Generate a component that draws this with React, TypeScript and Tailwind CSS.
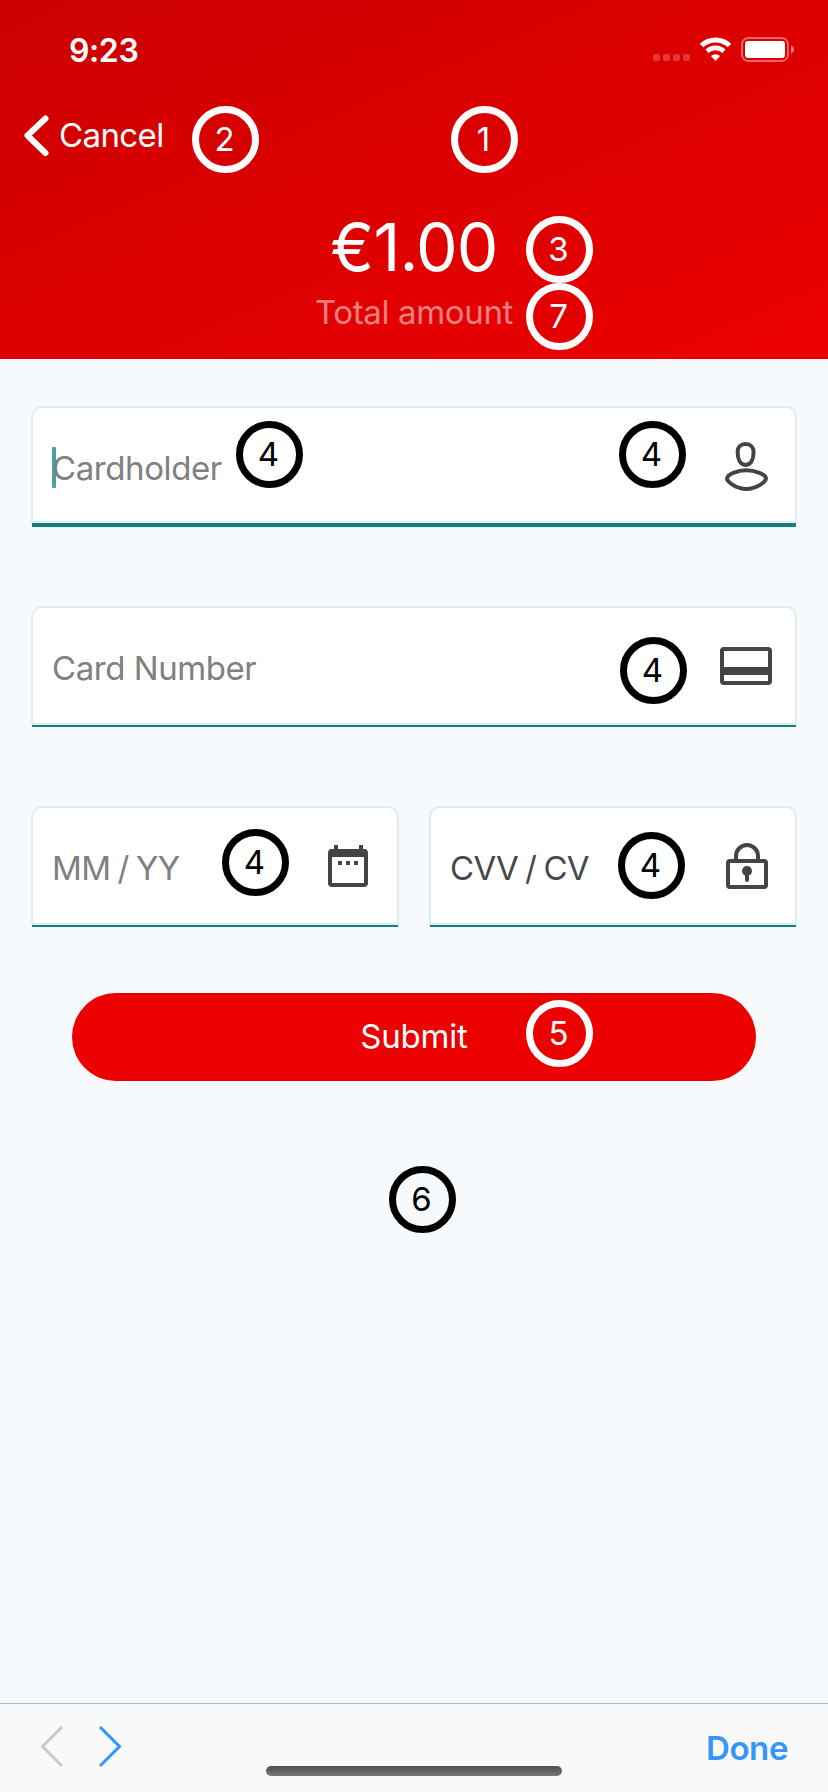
import type { ReactNode } from "react";

type BadgeProps = { n: number; place: string; tone: string };

function Badge({ n, place, tone }: BadgeProps) {
  return (
    <span
      className={`absolute flex h-[67px] w-[67px] items-center justify-center rounded-full border-[7px] pr-0.5 text-[33px] leading-none ${place} ${tone}`}
    >
      {n}
    </span>
  );
}

const light = "border-white text-white";
const dark = "border-black text-black";

type FieldProps = { children: ReactNode; icon: ReactNode; active?: boolean; className?: string };

function Field({ children, icon, active = false, className = "" }: FieldProps) {
  return (
    <div className={`flex h-[121px] flex-col ${className}`}>
      <div className="flex min-h-0 flex-1 items-start justify-between rounded-t-[11px] border-2 border-[#ddedf3] bg-white pl-[19px]">
        <div className="flex h-[120px] items-center text-[33px] leading-none whitespace-nowrap">{children}</div>
        {icon}
      </div>
      <div className={`mx-px shrink-0 bg-[#147e80] ${active ? "h-1" : "h-0.5"}`} />
    </div>
  );
}

const iconClass = "mt-[28px] mr-[19px] h-[60px] w-[60px] shrink-0";

function PersonIcon() {
  return (
    <svg className={iconClass} viewBox="0 0 60 60" fill="none" stroke="#444" strokeWidth="4">
      <path d="M29.5 8C24.8 8 21.6 11.2 21.6 15.8C21.6 22.7 23.8 28.9 29.5 28.9C35.2 28.9 37.6 22.7 37.6 15.8C37.6 11.2 34.2 8 29.5 8Z" />
      <path d="M30.3 34.3C39 34.3 50 38.2 50 42.6C50 45.5 40.5 53 30.3 53C20 53 11 45.5 11 42.6C11 38.2 21.5 34.3 30.3 34.3Z" />
    </svg>
  );
}

function CardIcon() {
  return (
    <svg className={iconClass} viewBox="0 0 60 60" fill="none">
      <rect x="6" y="13" width="48" height="34" rx="2" stroke="#444" strokeWidth="4" />
      <rect x="6" y="31" width="48" height="8" fill="#444" />
    </svg>
  );
}

function CalendarIcon() {
  return (
    <svg className={iconClass} viewBox="0 0 60 60" fill="none">
      <rect x="12" y="15" width="36" height="34" rx="2" stroke="#444" strokeWidth="4" />
      <path
        d="M12 13h36v8H12zM16 9h4v5h-4zM41 9h4v5h-4zM20 25h4v4h-4zM28 25h4v4h-4zM36 25h4v4h-4z"
        fill="#444"
      />
    </svg>
  );
}

function LockIcon() {
  return (
    <svg className={iconClass} viewBox="0 0 60 60" fill="none" stroke="#444" strokeWidth="4">
      <rect x="12" y="25" width="38" height="26" rx="2" />
      <path d="M20 25v-5a11 11 0 0 1 22 0v5" />
      <circle cx="31" cy="35" r="5" fill="#444" stroke="none" />
      <path d="M31 36v8" strokeLinecap="round" />
    </svg>
  );
}

function StatusIcons() {
  return (
    <svg className="h-[30px] w-[150px]" viewBox="0 0 150 30" fill="none">
      <g fill="#fff" fillOpacity="0.22">
        <rect x="3" y="19" width="7" height="7" rx="2" />
        <rect x="13" y="19" width="7" height="7" rx="2" />
        <rect x="23" y="19" width="7" height="7" rx="2" />
        <rect x="33" y="19" width="7" height="7" rx="2" />
      </g>
      <path d="M51.5 10.5A20.5 20.5 0 0 1 79.5 10.5" stroke="#fff" strokeWidth="5" />
      <path d="M57 16.2A12.5 12.5 0 0 1 74 16.2" stroke="#fff" strokeWidth="4.6" />
      <path d="M61 21.1A6.5 6.5 0 0 1 70 21.1L65.5 26Z" fill="#fff" />
      <rect x="92" y="3" width="46" height="23" rx="6.5" stroke="#fff" strokeOpacity="0.4" strokeWidth="2" />
      <rect x="95" y="6" width="40" height="17" rx="3" fill="#fff" />
      <path d="M141 10.5C145 12 145 17 141 18.5Z" fill="#fff" fillOpacity="0.5" />
    </svg>
  );
}

export default function App() {
  return (
    <main className="relative flex h-[1792px] w-[828px] flex-col overflow-hidden bg-[#f6fafd] font-['Inter','Liberation_Sans',sans-serif]">
      <header className="flex h-[359px] shrink-0 flex-col bg-linear-to-br from-[#cc0000] to-[#ec0000] text-white">
        <div className="flex h-[100px] items-center justify-between pr-[28px] pl-[69px]">
          <span className="pt-px text-[32px] leading-none font-semibold tracking-[-0.4px]">9:23</span>
          <StatusIcons />
        </div>
        <div className="flex h-[72px] items-center pl-6">
          <svg className="h-[42px] w-[26px]" viewBox="0 0 26 42" fill="none">
            <path d="M21.5 3.5L3.5 20.5L21.5 38" stroke="#fff" strokeWidth="6" strokeLinecap="round" strokeLinejoin="round" />
          </svg>
          <span className="ml-[9px] pb-0.5 text-[33px] leading-none tracking-[-0.6px]">Cancel</span>
        </div>
        <div className="flex flex-col items-center pt-[41px]">
          <span className="text-[66px] leading-[68px] tracking-[-0.8px]">€1.00</span>
          <span className="mt-[11px] text-[33px] leading-[40px] tracking-[-0.35px] text-white/50">Total amount</span>
        </div>
      </header>

      <section className="flex flex-col px-[31px] pt-[47px]">
        <Field active icon={<PersonIcon />}>
          <span className="mb-0.5 h-[41px] w-1 rounded-[1px] bg-[#4fa0a5]" />
          <span className="-ml-1 tracking-[-0.4px] text-[#808080]">Cardholder</span>
        </Field>
        <Field className="mt-[79px]" icon={<CardIcon />}>
          <span className="tracking-[-0.45px] text-[#808080]">Card Number</span>
        </Field>
        <div className="mt-[79px] flex gap-[30px]">
          <Field className="w-[368px]" icon={<CalendarIcon />}>
            <span className="tracking-[-0.6px] [word-spacing:-1.5px] text-[#808080]">MM / YY</span>
          </Field>
          <Field className="w-[368px]" icon={<LockIcon />}>
            <span className="tracking-[-0.7px] [word-spacing:-1.5px] text-[#484848]">CVV / CV</span>
          </Field>
        </div>
        <button className="mx-[41px] mt-[66px] h-[88px] rounded-full bg-[#ec0000] pb-0.5 text-[33px] leading-none tracking-[-0.2px] text-white">
          Submit
        </button>
      </section>

      <footer className="mt-auto flex h-[89px] shrink-0 flex-col border-t border-[#b5b7ba] bg-[#f9f9f9]">
        <div className="flex h-[62px] items-start justify-between bg-linear-to-b from-[#f6f8fa] to-[#f9f9f9] to-40% pr-[40px] pl-[40px]">
          <svg className="mt-[22px] h-[42px] w-[84px] shrink-0" viewBox="0 0 84 42" fill="none" strokeWidth="3">
            <path d="M22 1L2.5 20.5L22 40" stroke="#cacaca" />
            <path d="M60 1L79.5 20.5L60 40" stroke="#3395ff" />
          </svg>
          <span className="mt-[27px] text-[33px] leading-[34px] font-semibold tracking-[-0.4px] text-[#3395ff]">Done</span>
        </div>
        <div className="mx-auto h-[10px] w-[296px] rounded-full bg-linear-to-b from-[#505050] to-[#777]" />
      </footer>

      <Badge n={1} place="left-[451px] top-[106px]" tone={light} />
      <Badge n={2} place="left-[192px] top-[106px]" tone={light} />
      <Badge n={3} place="left-[526px] top-[216px]" tone={light} />
      <Badge n={7} place="left-[526px] top-[283px]" tone={light} />
      <Badge n={4} place="left-[236px] top-[421px]" tone={dark} />
      <Badge n={4} place="left-[619px] top-[421px]" tone={dark} />
      <Badge n={4} place="left-[620px] top-[637px]" tone={dark} />
      <Badge n={4} place="left-[222px] top-[829px]" tone={dark} />
      <Badge n={4} place="left-[618px] top-[832px]" tone={dark} />
      <Badge n={5} place="left-[526px] top-[1000px]" tone={light} />
      <Badge n={6} place="left-[389px] top-[1166px]" tone={dark} />
    </main>
  );
}
